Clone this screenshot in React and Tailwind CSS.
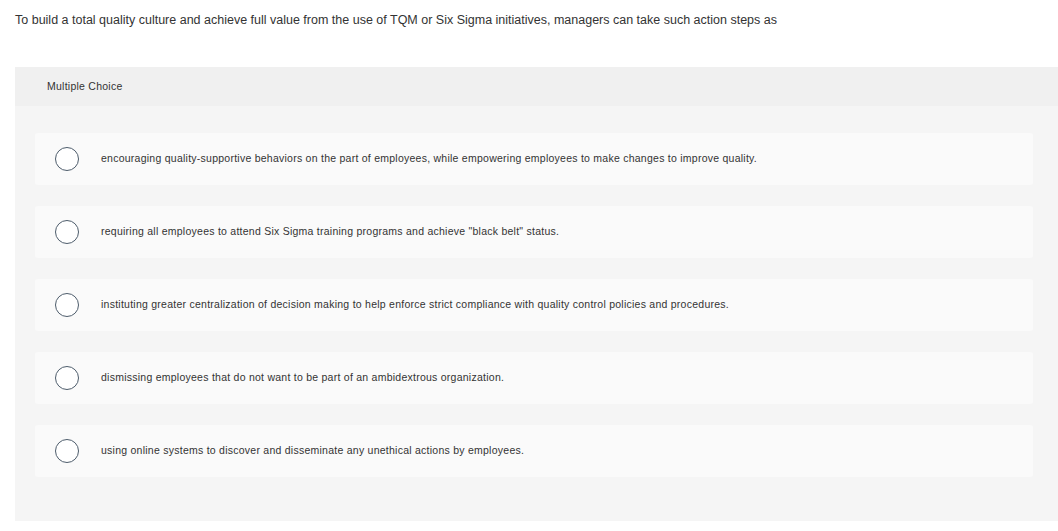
import React from 'react';

const options = [
  'encouraging quality-supportive behaviors on the part of employees, while empowering employees to make changes to improve quality.',
  'requiring all employees to attend Six Sigma training programs and achieve "black belt" status.',
  'instituting greater centralization of decision making to help enforce strict compliance with quality control policies and procedures.',
  'dismissing employees that do not want to be part of an ambidextrous organization.',
  'using online systems to discover and disseminate any unethical actions by employees.',
];

function Option({ text }) {
  return (
    <div className="h-[52px] flex items-center bg-[#fafafa] rounded-[3px]">
      <span className="ml-[20px] w-[24px] h-[24px] rounded-full border-[1.5px] border-[#4d5c6b] bg-white shrink-0" />
      <span className="ml-[22px] text-[10.5px] tracking-[0.25px] text-[#333]">{text}</span>
    </div>
  );
}

export default function App() {
  return (
    <div className="w-[1058px] h-[531px] bg-white pt-[11px] pl-[15px] overflow-hidden" style={{ fontFamily: '"Liberation Sans", Arial, sans-serif' }}>
      <p className="text-[12.5px] text-[#333] h-[56px]">
        To build a total quality culture and achieve full value from the use of TQM or Six Sigma initiatives, managers can take such action steps as
      </p>
      <div className="bg-[#f5f5f5] h-[454px]">
        <div className="h-[39px] bg-[#f0f0f0] flex items-center pl-[32px] text-[10.5px] tracking-[0.25px] text-[#333]">
          Multiple Choice
        </div>
        <div className="pt-[27px] pl-[20px] pr-[25px] flex flex-col gap-[21px]">
          {options.map((o) => (
            <Option key={o} text={o} />
          ))}
        </div>
      </div>
    </div>
  );
}
